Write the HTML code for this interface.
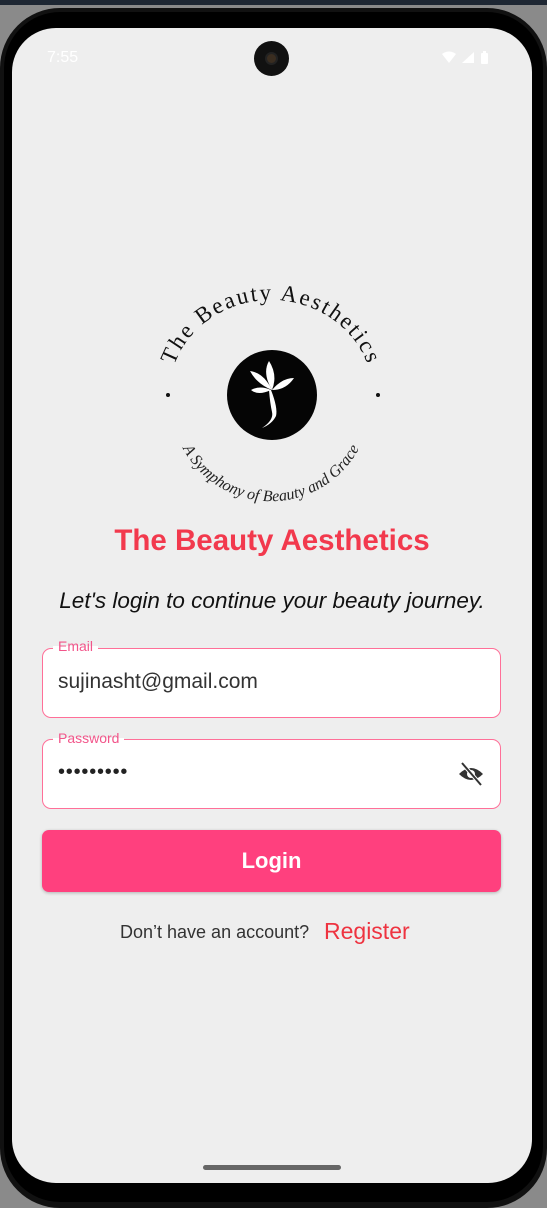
<!DOCTYPE html>
<html><head><meta charset="utf-8"><style>
*{margin:0;padding:0;box-sizing:border-box}
body{width:547px;height:1192px;background:#8a8a8a;position:relative;overflow:hidden;font-family:"Liberation Sans",Roboto,sans-serif}
.top{position:absolute;left:0;top:0;width:547px;height:5px;background:#1e2733}
.frame{position:absolute;left:0;top:8px;width:547px;height:1200px;background:#111;border-radius:60px}
.frame2{position:absolute;left:4px;top:12px;width:539px;height:1190px;background:#000;border-radius:56px}
.screen{position:absolute;left:12px;top:28px;width:520px;height:1155px;background:#eeeeee;border-radius:44px;overflow:hidden}
.abs{position:absolute}
</style></head><body>
<div class="top"></div>
<div class="frame"></div><div class="frame2"></div>
<div class="screen">
 <div class="abs" style="left:35px;top:21px;color:#fff;font-size:16px">7:55</div>
 <div class="abs" style="left:242px;top:13px;width:35px;height:35px;border-radius:50%;background:#111"><div style="position:absolute;left:11px;top:11px;width:13px;height:13px;border-radius:50%;background:#3a2d20;border:2px solid #222"></div></div>
 <svg class="abs" style="left:428px;top:22px" width="58" height="18"><path d="M2 4 Q9 -1 16 4 L9 13Z" fill="#fff"/><path d="M22 13 L34 2 L34 13Z" fill="#fff"/><rect x="41" y="3" width="7" height="11" rx="1" fill="#fff"/><rect x="43" y="1" width="3" height="3" fill="#fff"/></svg>
 <svg class="abs" style="left:0;top:0" width="520" height="520">
  <defs>
   <path id="top" d="M157 367 A102 95 0 0 1 361 367"/>
   <path id="bot" d="M166 410 A100 100 0 0 0 352 410"/>
  </defs>
  <text font-family="Liberation Serif,serif" font-size="23" letter-spacing="2" fill="#111"><textPath href="#top" startOffset="50%" text-anchor="middle">The Beauty Aesthetics</textPath></text>
  <text font-family="Liberation Serif,serif" font-style="italic" font-size="16" fill="#222"><textPath href="#bot" startOffset="50%" text-anchor="middle">A Symphony of Beauty and Grace</textPath></text>
  <circle cx="156" cy="367" r="2" fill="#111"/><circle cx="366" cy="367" r="2" fill="#111"/>
  <circle cx="260" cy="367" r="45" fill="#050505"/>
  <g fill="#fff">
   <path d="M260 362 Q250 345 257 333 Q266 347 260 362Z"/>
   <path d="M260 362 Q245 356 238 343 Q252 345 260 362Z"/>
   <path d="M260 362 Q270 350 282 350 Q274 362 260 362Z"/>
   <path d="M259 362 Q246 368 239 362 Q248 357 259 362Z"/>
   <path d="M259 362 Q266 380 264 388 Q260 396 250 400 Q262 392 260 384 Q258 375 257 362Z"/>
  </g>
 </svg>
 <div class="abs" style="left:0;width:520px;top:496px;text-align:center;color:#f2394d;font-weight:bold;font-size:29.5px">The Beauty Aesthetics</div>
 <div class="abs" style="left:0;width:520px;top:560px;text-align:center;color:#111;font-style:italic;font-size:22.5px">Let's login to continue your beauty journey.</div>
 <div class="abs" style="left:30px;top:620px;width:459px;height:70px;background:#fff;border:1.5px solid #ff6f98;border-radius:9px"></div>
 <div class="abs" style="left:41px;top:611px;padding:0 5px;color:#f2558a;font-size:14px;height:14px;line-height:14px;background:linear-gradient(#eeeeee 50%,#fff 50%)">Email</div>
 <div class="abs" style="left:46px;top:642px;color:#333;font-size:21px">sujinasht@gmail.com</div>
 <div class="abs" style="left:30px;top:711px;width:459px;height:70px;background:#fff;border:1.5px solid #ff6f98;border-radius:9px"></div>
 <div class="abs" style="left:41px;top:703px;padding:0 5px;color:#f2558a;font-size:14px;height:14px;line-height:14px;background:linear-gradient(#eeeeee 50%,#fff 50%)">Password</div>
 <div class="abs" style="left:46px;top:733px;color:#222;font-size:20px;letter-spacing:0.8px">•••••••••</div>
 <svg class="abs" style="left:445px;top:733px" width="28" height="26" viewBox="0 0 28 26"><path d="M2 13 Q14 1 26 13 Q14 25 2 13Z" fill="#333"/><circle cx="14" cy="13" r="4" fill="#fff"/><line x1="5" y1="2" x2="24" y2="24" stroke="#fff" stroke-width="4"/><line x1="5" y1="2" x2="24" y2="24" stroke="#333" stroke-width="2"/></svg>
 <div class="abs" style="left:30px;top:802px;width:459px;height:62px;background:#ff407e;border-radius:7px;box-shadow:0 1px 3px rgba(0,0,0,.25);color:#fff;font-size:22px;font-weight:bold;text-align:center;line-height:62px">Login</div>
 <div class="abs" style="left:108px;top:894px;color:#333;font-size:18px">Don’t have an account?</div>
 <div class="abs" style="left:312px;top:890px;color:#ee3340;font-size:23px">Register</div>
 <div class="abs" style="left:191px;top:1137px;width:138px;height:5px;border-radius:3px;background:#666"></div>
</div>
</body></html>
